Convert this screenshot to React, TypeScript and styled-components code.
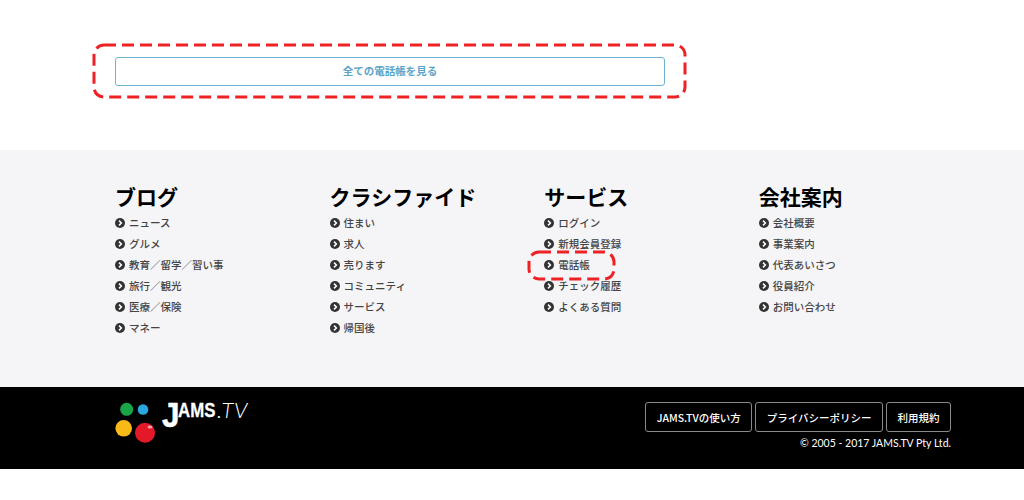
import React from 'react';
import styled, { createGlobalStyle } from 'styled-components';

const GlobalStyle = createGlobalStyle`
  html, body {
    margin: 0;
    padding: 0;
    background: #fff;
    font-family: 'Noto Sans CJK JP', 'Noto Sans', sans-serif;
  }
`;

const Page = styled.div`
  width: 1024px;
  height: 500px;
  overflow: hidden;
  background: #fff;
`;

const TopSection = styled.section`
  height: 150px;
  box-sizing: border-box;
  padding: 57px 0 0 115px;
`;

const Highlight = styled.span`
  position: relative;
  display: block;
`;

const DashedFrame = styled.svg`
  position: absolute;
  overflow: visible;
  pointer-events: none;
  fill: none;
  stroke: #ee2124;
  stroke-width: 3;
  stroke-dasharray: 12 6;
`;

const WideFrame = styled(DashedFrame)`
  left: -21px;
  top: -12px;
  width: 591px;
  height: 52px;
`;

const ItemFrame = styled(DashedFrame)`
  left: -29px;
  top: -5px;
  width: 85px;
  height: 27px;
`;

const AllButton = styled.a`
  display: flex;
  align-items: center;
  justify-content: center;
  width: 550px;
  height: 29px;
  box-sizing: border-box;
  padding-bottom: 2px;
  border: 1px solid #6fb3d2;
  border-radius: 3px;
  color: #5ba4c9;
  font-size: 10.5px;
  font-weight: 700;
`;

const LinksSection = styled.section`
  height: 237px;
  box-sizing: border-box;
  background: #f5f5f8;
  padding: 32px 0 0 115px;
  display: grid;
  grid-template-columns: repeat(4, 214.6px);
`;

const Column = styled.div`
  display: flex;
  flex-direction: column;
`;

const Heading = styled.h3`
  margin: 0 0 1px;
  height: 29px;
  font-size: 21px;
  line-height: 29px;
  font-weight: 700;
  color: #000;
`;

const List = styled.ul`
  margin: 0;
  padding: 0;
  list-style: none;
`;

const Item = styled.li`
  display: flex;
  align-items: center;
  gap: 4px;
  height: 21px;
  font-size: 10.5px;
  font-weight: 500;
  color: #444;
  white-space: nowrap;
`;

const Bullet = styled.svg`
  width: 10px;
  height: 10px;
  flex: none;
`;

const BottomBar = styled.footer`
  height: 82px;
  box-sizing: border-box;
  background: #000;
  padding: 15px 73px 0 115px;
  display: flex;
  justify-content: space-between;
`;

const Logo = styled.div`
  display: flex;
  align-items: flex-start;
  gap: 6px;
`;

const Balls = styled.svg`
  width: 41px;
  height: 41px;
  flex: none;
`;

const LogoText = styled.div`
  display: flex;
  align-items: flex-start;
  color: #fff;
  font-family: 'Liberation Sans', sans-serif;
  white-space: nowrap;
`;

const LogoJ = styled.span`
  font-size: 35px;
  line-height: 35px;
  font-weight: 700;
  margin-top: -5px;
  width: 16px;
  transform-origin: left top;
  transform: scaleX(0.9);
  -webkit-text-stroke: 0.5px #fff;
`;

const LogoAms = styled.span`
  font-size: 21px;
  line-height: 21px;
  font-weight: 700;
  margin-top: -3px;
  width: 39px;
  transform-origin: left top;
  transform: scaleX(0.8);
  -webkit-text-stroke: 0.3px #fff;
`;

const LogoTv = styled.span`
  font-family: 'Lato', sans-serif;
  font-size: 22px;
  line-height: 21px;
  font-style: italic;
  font-weight: 300;
  margin-top: -3px;
  letter-spacing: 1px;
`;

const BottomRight = styled.div`
  display: flex;
  flex-direction: column;
  align-items: flex-end;
  gap: 4px;
`;

const NavRow = styled.nav`
  display: flex;
  gap: 3px;
`;

const NavButton = styled.a`
  display: flex;
  align-items: center;
  height: 30px;
  box-sizing: border-box;
  padding: 0 10.5px;
  border: 1px solid #8a8a8a;
  border-radius: 3px;
  color: #fff;
  font-size: 10.5px;
  font-weight: 500;
  white-space: nowrap;
`;

const Copyright = styled.div`
  font-family: 'Lato', sans-serif;
  font-size: 10.5px;
  font-weight: 400;
  line-height: 14px;
  color: #fff;
`;

type Link = { label: string; highlighted?: boolean };

const columns: { title: string; links: Link[] }[] = [
  {
    title: 'ブログ',
    links: [
      { label: 'ニュース' },
      { label: 'グルメ' },
      { label: '教育／留学／習い事' },
      { label: '旅行／観光' },
      { label: '医療／保険' },
      { label: 'マネー' },
    ],
  },
  {
    title: 'クラシファイド',
    links: [
      { label: '住まい' },
      { label: '求人' },
      { label: '売ります' },
      { label: 'コミュニティ' },
      { label: 'サービス' },
      { label: '帰国後' },
    ],
  },
  {
    title: 'サービス',
    links: [
      { label: 'ログイン' },
      { label: '新規会員登録' },
      { label: '電話帳', highlighted: true },
      { label: 'チェック履歴' },
      { label: 'よくある質問' },
    ],
  },
  {
    title: '会社案内',
    links: [
      { label: '会社概要' },
      { label: '事業案内' },
      { label: '代表あいさつ' },
      { label: '役員紹介' },
      { label: 'お問い合わせ' },
    ],
  },
];

function ItemBullet() {
  return (
    <Bullet viewBox="0 0 10 10">
      <circle cx="5" cy="5" r="5" fill="#333" />
      <path d="M4 2.6 L6.4 5 L4 7.4" fill="none" stroke="#fff" strokeWidth="1.5" />
    </Bullet>
  );
}

export default function App() {
  return (
    <Page>
      <GlobalStyle />
      <TopSection>
        <Highlight>
          <AllButton>全ての電話帳を見る</AllButton>
          <WideFrame viewBox="0 0 591 52">
            <rect x="0" y="0" width="591" height="52" rx="10" />
          </WideFrame>
        </Highlight>
      </TopSection>
      <LinksSection>
        {columns.map((col) => (
          <Column key={col.title}>
            <Heading>{col.title}</Heading>
            <List>
              {col.links.map((link) => (
                <Item key={link.label}>
                  <ItemBullet />
                  {link.highlighted ? (
                    <Highlight>
                      {link.label}
                      <ItemFrame viewBox="0 0 85 27">
                        <rect x="0" y="0" width="85" height="27" rx="10" />
                      </ItemFrame>
                    </Highlight>
                  ) : (
                    link.label
                  )}
                </Item>
              ))}
            </List>
          </Column>
        ))}
      </LinksSection>
      <BottomBar>
        <Logo>
          <Balls viewBox="0 0 41 41">
            <circle cx="11.7" cy="7.3" r="6.5" fill="#1aa548" />
            <circle cx="28" cy="7.5" r="5.3" fill="#29a7df" />
            <circle cx="8.7" cy="26.3" r="8.3" fill="#f9b916" />
            <circle cx="30" cy="30.7" r="10" fill="#e3192a" />
            <ellipse cx="35" cy="25" rx="2.5" ry="1.5" fill="#f7a0a0" />
          </Balls>
          <LogoText>
            <LogoJ>J</LogoJ>
            <LogoAms>AMS</LogoAms>
            <LogoTv>.TV</LogoTv>
          </LogoText>
        </Logo>
        <BottomRight>
          <NavRow>
            <NavButton>JAMS.TVの使い方</NavButton>
            <NavButton>プライバシーポリシー</NavButton>
            <NavButton>利用規約</NavButton>
          </NavRow>
          <Copyright>© 2005 - 2017 JAMS.TV Pty Ltd.</Copyright>
        </BottomRight>
      </BottomBar>
    </Page>
  );
}
